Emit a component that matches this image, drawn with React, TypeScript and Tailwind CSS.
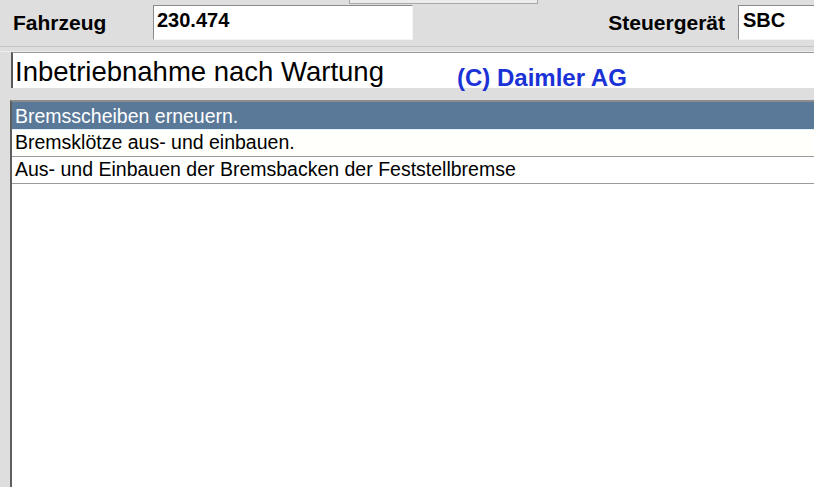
import React from "react";

export default function App() {
  const rows = [
    "Bremsscheiben erneuern.",
    "Bremsklötze aus- und einbauen.",
    "Aus- und Einbauen der Bremsbacken der Feststellbremse",
  ];
  return (
    <div className="relative w-[814px] h-[487px] overflow-hidden bg-[#dedede] font-['Liberation_Sans',Arial,sans-serif] text-black">
      {/* partially visible element at top */}
      <div className="absolute left-[349px] top-[-20px] w-[189px] h-[24px] bg-[#ececec] border border-[#a8a8a8]" />

      {/* top row */}
      <div className="flex items-start h-[46px] pt-[5px]">
        <div className="w-[153px] shrink-0 pl-[13px] text-[21px] font-bold leading-[35px]">
          Fahrzeug
        </div>
        <div className="w-[260px] shrink-0 h-[35px] bg-white border-t border-l border-[#8a8a8a] border-r border-r-[#f4f4f4] border-b border-b-[#f4f4f4] pl-[3px] pt-[4px] text-[20px] font-bold leading-[20px]">
          230.474
        </div>
        <div className="flex-1 text-right pr-[13px] text-[21px] font-bold leading-[35px]">
          Steuergerät
        </div>
        <div className="w-[76px] shrink-0 h-[35px] bg-white border-t border-l border-[#8a8a8a] border-b border-b-[#f4f4f4] pl-[4px] pt-[4px] text-[20px] font-bold leading-[20px]">
          SBC
        </div>
      </div>

      {/* separator */}
      <div className="h-[6px] border-t border-t-[#c4c4c4] border-b border-b-[#ececec]" />

      {/* title box */}
      <div className="ml-[11px] h-[36px] bg-white border-t border-t-[#9a9a9a] border-l-2 border-l-[#5a5a5a] pl-[2px] pt-[2px] text-[27.5px] leading-[34px] whitespace-nowrap">
        Inbetriebnahme nach Wartung
      </div>

      <div className="absolute left-[457px] top-[66px] text-[24px] font-bold leading-none text-[#1b33d6] whitespace-nowrap">
        (C) Daimler AG
      </div>

      {/* list */}
      <div className="mt-[12px] ml-[10px] h-[400px] bg-white border-t-2 border-t-[#8c8c8c] border-l-2 border-l-[#5e5e5e]">
        <div className="h-[28px] bg-[#5a7999] text-white pl-[3px] pt-[3px] text-[19.5px] leading-[22px] border-b border-b-[#e4f0f8] whitespace-nowrap">
          {rows[0]}
        </div>
        <div className="h-[27px] bg-[#fffffb] pl-[3px] text-[19.5px] leading-[25px] border-b border-b-[#9a9a9a] whitespace-nowrap">
          {rows[1]}
        </div>
        <div className="h-[27px] bg-white pl-[3px] text-[19.5px] leading-[25px] border-b border-b-[#9a9a9a] whitespace-nowrap">
          {rows[2]}
        </div>
      </div>
    </div>
  );
}
